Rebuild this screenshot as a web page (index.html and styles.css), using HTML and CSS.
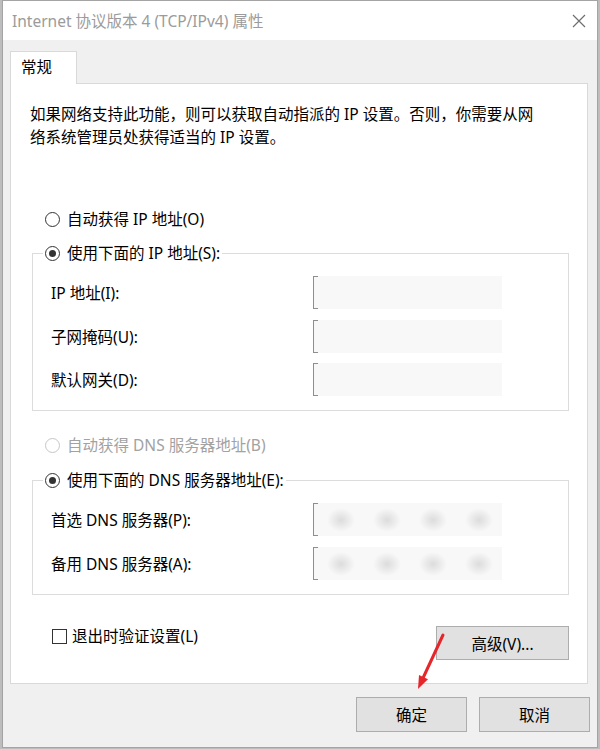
FILE: index.html
```html
<!DOCTYPE html>
<html lang="zh-CN">
<head>
  <meta charset="UTF-8">
  <meta name="viewport" content="width=device-width, initial-scale=1.0">
  <title>Internet 协议版本 4 (TCP/IPv4) 属性</title>
  <link rel="stylesheet" href="styles.css">
</head>
<body>
  <div class="window">
    <header class="titlebar">
      <span class="title">Internet 协议版本 4 (TCP/IPv4) 属性</span>
      <svg class="close" width="14" height="14" viewBox="0 0 14 14">
        <path d="M1 1L13 13M13 1L1 13" stroke="#6e6e6e" stroke-width="1.2" fill="none"/>
      </svg>
    </header>

    <div class="body">
      <div class="tabs">
        <div class="tab">常规</div>
      </div>

      <section class="panel">
        <p class="intro">如果网络支持此功能，则可以获取自动指派的 IP 设置。否则，你需要从网<br>络系统管理员处获得适当的 IP 设置。</p>

        <label class="option first"><input type="radio" name="ip">自动获得 IP 地址(O)</label>

        <fieldset class="group">
          <legend><label class="option"><input type="radio" name="ip" checked>使用下面的 IP 地址(S):</label></legend>
          <div class="fields">
            <span>IP 地址(I):</span>
            <div class="field"></div>
            <span>子网掩码(U):</span>
            <div class="field"></div>
            <span>默认网关(D):</span>
            <div class="field"></div>
          </div>
        </fieldset>

        <label class="option disabled"><input type="radio" name="dns" disabled>自动获得 DNS 服务器地址(B)</label>

        <fieldset class="group dns">
          <legend><label class="option"><input type="radio" name="dns" checked>使用下面的 DNS 服务器地址(E):</label></legend>
          <div class="fields">
            <span>首选 DNS 服务器(P):</span>
            <div class="field blurred"><i></i><i></i><i></i><i></i></div>
            <span>备用 DNS 服务器(A):</span>
            <div class="field blurred"><i></i><i></i><i></i><i></i></div>
          </div>
        </fieldset>

        <div class="panel-foot">
          <label class="check"><input type="checkbox">退出时验证设置(L)</label>
          <button class="btn advanced">高级(V)...</button>
        </div>
      </section>

      <div class="actions">
        <button class="btn">确定</button>
        <button class="btn">取消</button>
      </div>
    </div>

    <!-- red pointer drawn over the dialog -->
    <svg class="arrow" width="40" height="65" viewBox="408 630 40 65">
      <line x1="443" y1="635" x2="423.5" y2="677" stroke="#e5262b" stroke-width="3" stroke-linecap="round"/>
      <polygon points="418,689 428,679.3 419,675.1" fill="#e5262b"/>
    </svg>
  </div>
</body>
</html>
```

FILE: styles.css
```css
* {
  box-sizing: border-box;
}

body {
  margin: 0;
  background: #bdbdbd;
  font-family: "Noto Sans", "Noto Sans CJK SC", sans-serif;
  font-size: 15.5px;
  color: #000;
}

.window {
  position: relative;
  width: 596px;
  height: 748px;
  margin-left: 2px;
  border: 1px solid #a4a4a4;
  background: #f0f0f0;
  display: flex;
  flex-direction: column;
}

.titlebar {
  height: 39px;
  background: #fff;
  display: flex;
  align-items: center;
  justify-content: space-between;
  padding: 0 11px 0 9px;
}

.title {
  color: #9b9b9b;
  line-height: 20px;
}

.body {
  flex: 1;
  padding: 11px 9px 0 7px;
}

.tab {
  position: relative;
  width: 67px;
  height: 33px;
  margin-bottom: -1px;
  padding: 5px 0 0 10px;
  line-height: 20px;
  background: #fff;
  border: 1px solid #d9d9d9;
  border-bottom: none;
}

.panel {
  background: #fff;
  border: 1px solid #d9d9d9;
  padding: 19px 18px 23px 19px;
}

.intro {
  margin: 0;
  line-height: 23px;
}

.option {
  display: flex;
  align-items: center;
  gap: 7px;
  line-height: 20px;
}

.option.first {
  margin: 60px 0 0 15px;
}

.option.disabled {
  margin: 24px 0 0 15px;
  color: #a2a2a2;
}

input[type="radio"] {
  appearance: none;
  flex: none;
  width: 15px;
  height: 15px;
  margin: 0;
  border: 1px solid #333;
  border-radius: 50%;
  background: #fff;
  display: grid;
  place-content: center;
}

input[type="radio"]:checked::before {
  content: "";
  width: 7px;
  height: 7px;
  border-radius: 50%;
  background: #333;
}

input[type="radio"]:disabled {
  border-color: #c6c6c6;
}

.group {
  margin: 14px 0 0 2px;
  min-width: 0;
  border: 1px solid #dcdcdc;
  padding: 13px 18px 14px 10px;
}

.group.dns {
  margin-top: 15px;
}

legend {
  padding: 0 2px;
}

.fields {
  display: grid;
  grid-template-columns: 262px 189px;
  row-gap: 10.5px;
  align-items: center;
  padding-left: 8px;
}

.dns .fields {
  row-gap: 11px;
}

.field {
  height: 33px;
  border-left: 1px solid #8e8e8e;
  background:
    linear-gradient(#8e8e8e, #8e8e8e) 0 0 / 4px 1px no-repeat,
    linear-gradient(#8e8e8e, #8e8e8e) 0 100% / 4px 1px no-repeat,
    #f8f8f8;
}

.field.blurred {
  display: flex;
  justify-content: space-around;
  align-items: center;
  padding-left: 4px;
}

.field.blurred i {
  width: 28px;
  height: 24px;
  background: radial-gradient(closest-side, #dcdcdc, rgba(220, 220, 220, 0));
}

.panel-foot {
  display: flex;
  justify-content: space-between;
  align-items: flex-start;
  margin-top: 31px;
  padding-left: 22px;
}

.check {
  display: flex;
  align-items: center;
  gap: 5px;
  line-height: 20px;
}

input[type="checkbox"] {
  appearance: none;
  width: 15px;
  height: 15px;
  margin: 0;
  border: 1px solid #333;
  background: #fff;
}

.btn {
  font: inherit;
  color: #000;
  background: #e1e1e1;
  border: 1px solid #adadad;
  padding: 0;
}

.advanced {
  width: 133px;
  height: 34px;
}

.actions {
  display: flex;
  justify-content: flex-end;
  gap: 12px;
  margin: 13px -2px 0 0;
}

.actions .btn {
  width: 111px;
  height: 35px;
}

.arrow {
  position: absolute;
  left: 405px;
  top: 629px;
}
```
